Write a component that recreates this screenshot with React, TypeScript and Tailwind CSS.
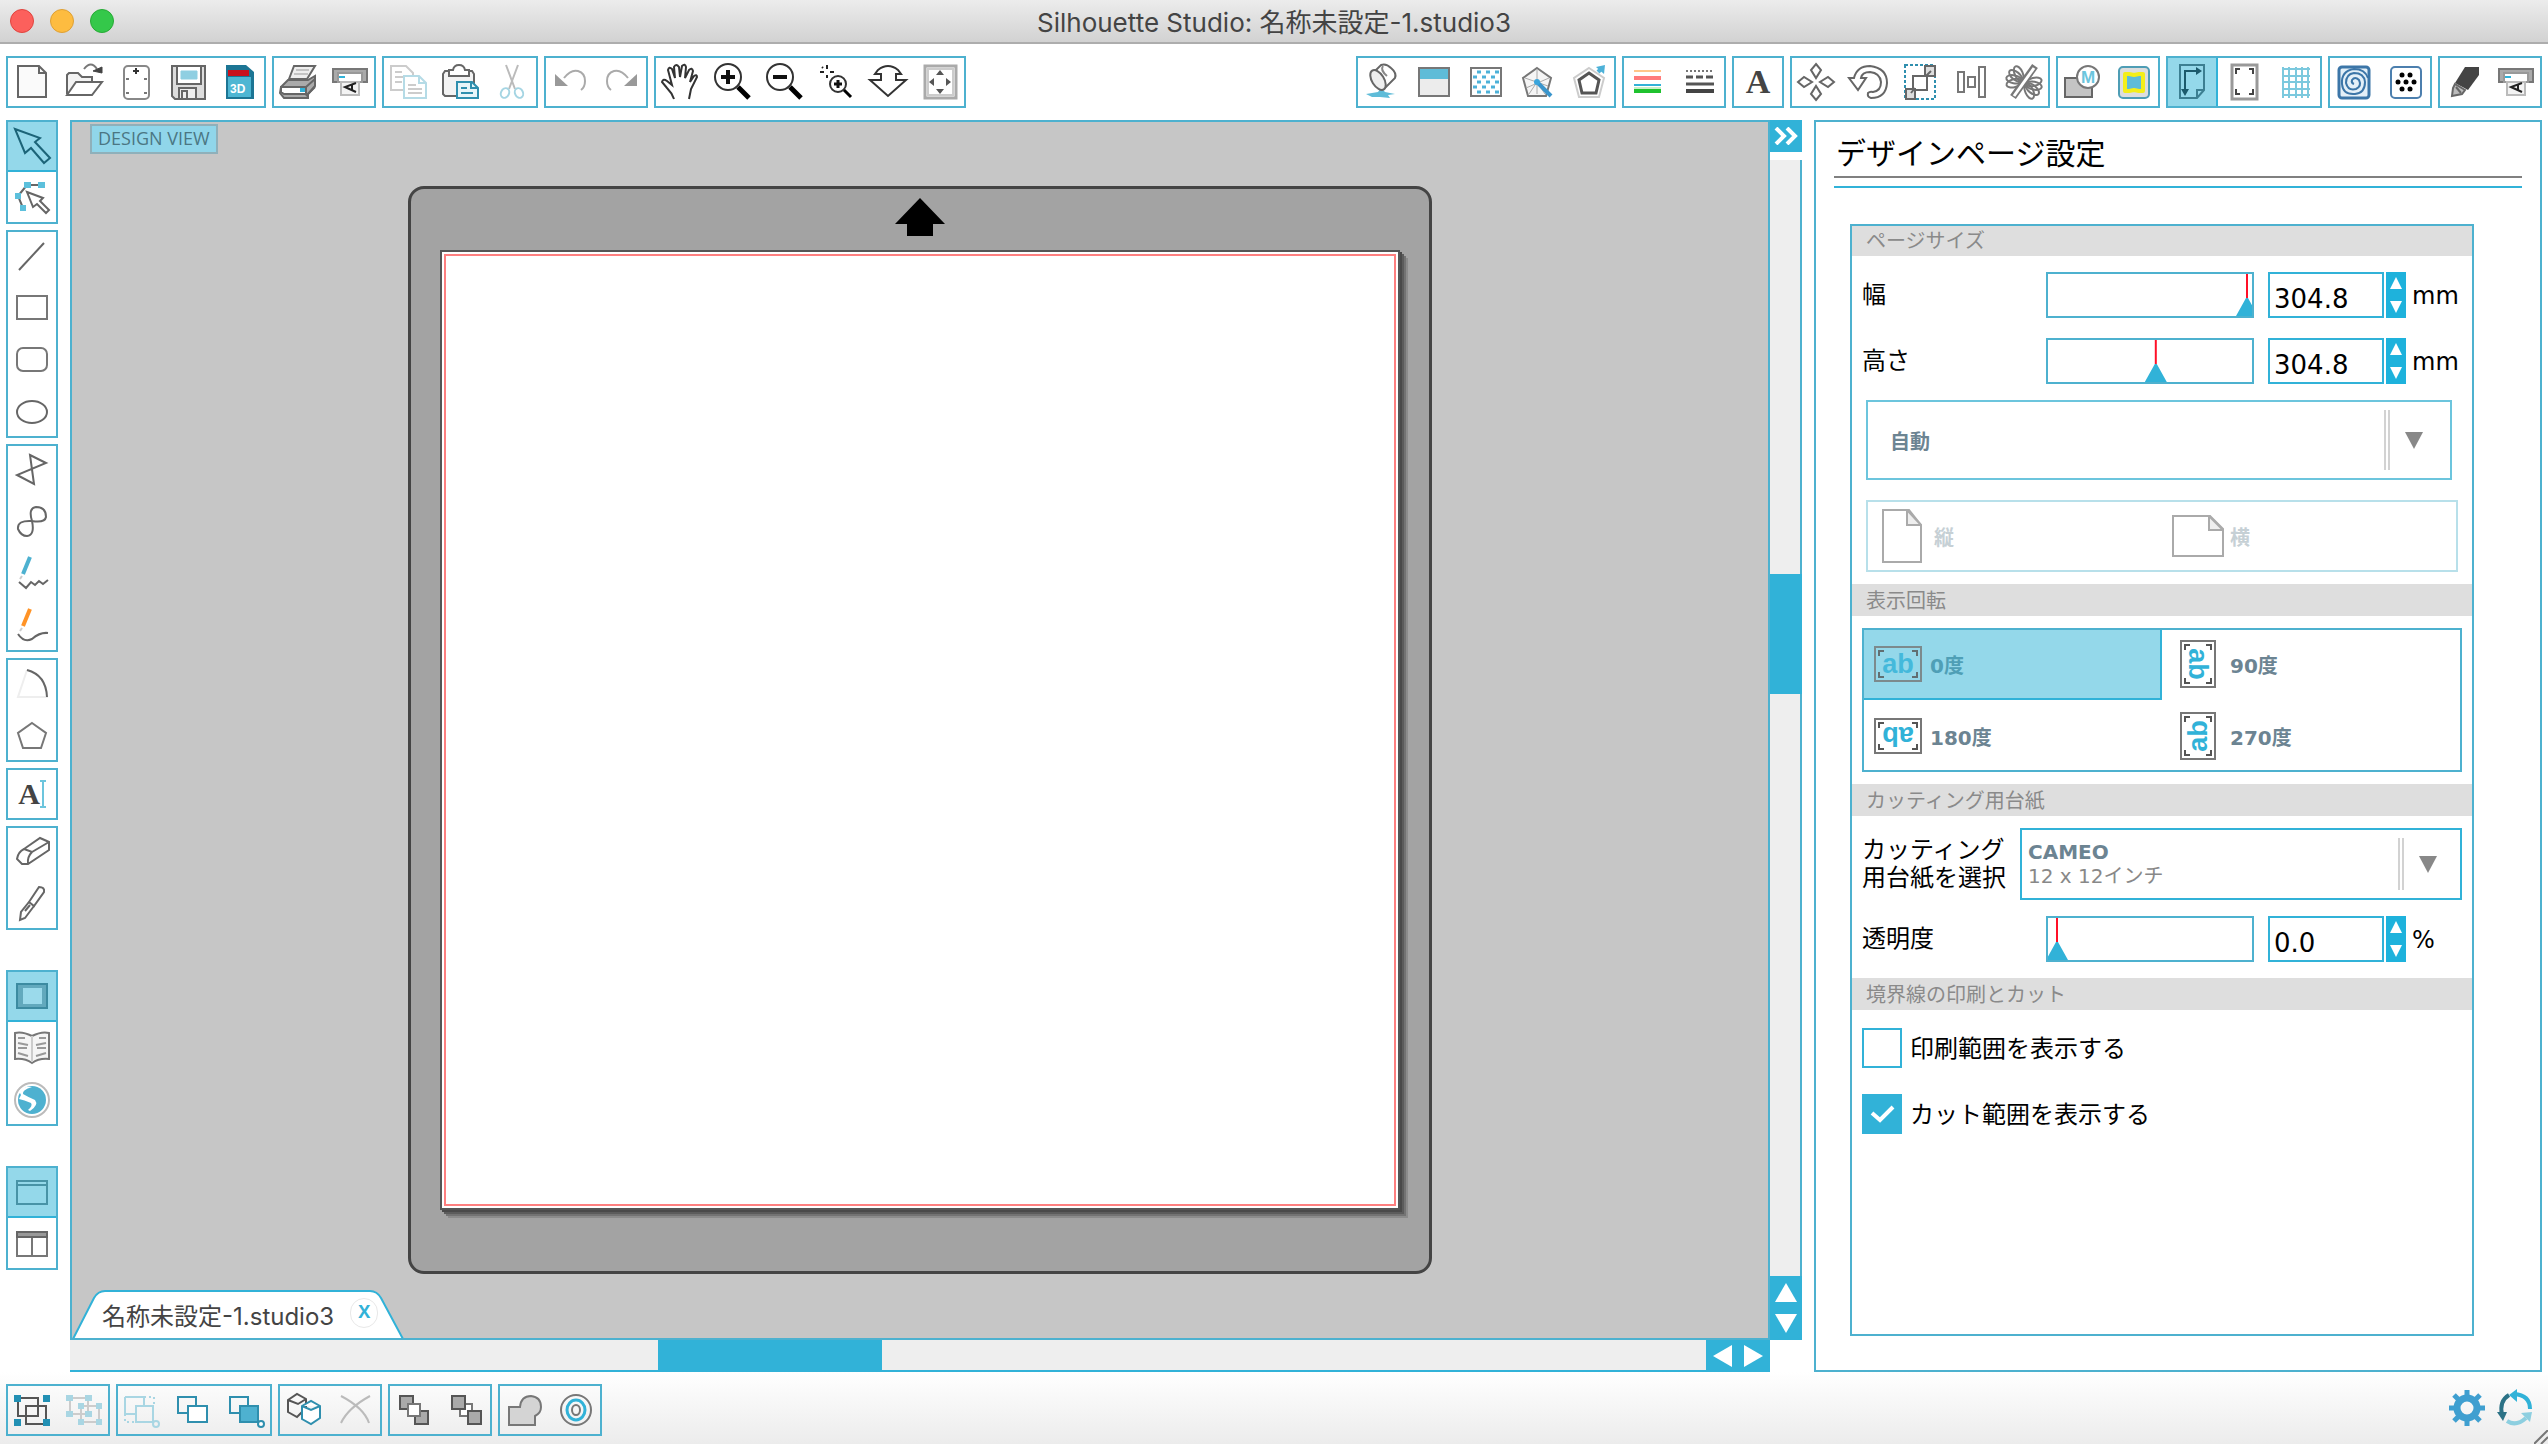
import { useState, type ReactNode } from "react";

const BLUE = "#31b2d8";
const TEAL = "#2f8fae";

const cutterIcon = (
  <>
    <path d="M9 13H43V26H38V17H14V26H9z" fill="#aaa" stroke="#777" />
    <path d="M14 17H38V26H14z" fill="#fff" stroke="#999" />
    <path d="M15 21h6" stroke={BLUE} />
    <path d="M17 26H35V39H17z" fill="#f3f3f3" stroke="#bbb" />
    <path d="M32 27L21 31L32 36M28 28v6" stroke="#222" strokeWidth="2" />
  </>
);

const sheetFold = (
  <>
    <path d="M12 10H33L40 17V41H12z" fill="#fafafa" />
    <path d="M33 10V17H40" />
  </>
);

const icons: Record<string, ReactNode> = {
  new: sheetFold,
  open: (
    <>
      <path d="M9 38V19L11 17H20L24 21H34V26" fill="#f3f3f3" />
      <path d="M9 39L18 26H44L34 39z" fill="#fff" />
      <path d="M26 13Q33 4 39 13" stroke="#777" />
      <path d="M35 15L44 11V17z" fill="#444" stroke="#444" strokeWidth="1" />
    </>
  ),
  mat: (
    <>
      <rect x="14" y="10" width="25" height="33" rx="4" stroke="#888" fill="#fff" />
      <path d="M26 12V18M23 15H29" stroke="#333" strokeWidth="2" />
      <path d="M16 23h3M34 23h3M16 37h3M34 37h3" stroke="#777" />
    </>
  ),
  save: (
    <>
      <path d="M10 10H43V43H13L10 40z" fill="#ddd" />
      <path d="M15 10H39V28H15z" fill="#fff" />
      <path d="M19 15H35V23H19z" fill="#8fcfe2" stroke="#8fcfe2" strokeWidth="1" />
      <path d="M17 42V32H34V42M20 42V35H25V42" fill="#eee" />
    </>
  ),
  sd: (
    <>
      <path d="M12 9H32L40 16V43H12z" fill="#1c7594" stroke="none" />
      <path d="M14 21H37V41H14z" fill="#4eb6d3" stroke="none" />
      <path d="M14 14H35V20H14z" fill="#c8101c" stroke="none" />
      <text x="16" y="37" fontSize="12" fontWeight="700" fill="#fff" stroke="none" fontFamily="Liberation Sans">3D</text>
    </>
  ),
  printer: (
    <>
      <path d="M17 23L22 10H43L35 23z" fill="#eee" />
      <path d="M24 14H37M22 18H36" stroke="#999" strokeWidth="1" />
      <path d="M9 31L16 24H36L43 20V30L36 38V42H12L8 37z" fill="#aaa" />
      <path d="M9 31H34V38H12L9 36z" fill="#fff" />
      <path d="M34 31L43 23M34 40L43 31" />
      <path d="M28 32h5v4h-5z" fill={BLUE} stroke="none" />
    </>
  ),
  cutter: cutterIcon,
  copy: (
    <>
      <path d="M9 10H24L31 17V34H9z" fill="#fff" stroke="#ccc" />
      <path d="M13 16H20M13 21H25M13 26H20" stroke="#ccc" />
      <path d="M22 20H37L44 27V42H22z" fill="#fff" stroke="#b5dbe6" />
      <path d="M37 20V27H44" stroke="#b5dbe6" />
      <path d="M26 29H34M26 33H40M26 37H40" stroke="#ccc" />
    </>
  ),
  paste: (
    <>
      <path d="M11 15H38L40 18V38L38 40H11L9 38V18z" fill="#f3f3f3" />
      <path d="M15 20V14H19Q20 9 25 9Q30 9 31 14H35V20z" fill="#fff" />
      <path d="M23 26H38L44 32V42H23z" fill="#e7f5f9" stroke={TEAL} />
      <path d="M37 26V32H44M27 32H33M27 37H39" stroke={TEAL} />
    </>
  ),
  cut: (
    <>
      <path d="M20 9L29 33M32 9L23 33" stroke="#bbb" />
      <ellipse cx="19" cy="37" rx="4" ry="5" stroke="#a5d5e3" transform="rotate(25 19 37)" />
      <ellipse cx="33" cy="37" rx="4" ry="5" stroke="#a5d5e3" transform="rotate(-25 33 37)" />
    </>
  ),
  undo: (
    <>
      <path d="M20 22Q27 13 34 15Q41 17 41 25Q41 31 37 34" stroke="#aaa" />
      <path d="M11 18V30H24z" fill="#999" stroke="none" />
    </>
  ),
  redo: (
    <>
      <path d="M32 22Q25 13 18 15Q11 17 11 25Q11 31 15 34" stroke="#aaa" />
      <path d="M41 18V30H28z" fill="#999" stroke="none" />
    </>
  ),
  hand: (
    <path
      d="M20 43Q18 37 13 32L8 26Q9 22 13 25L18 29L14 14Q15 10 18 13L21 22L20 11Q22 7 25 11L26 21L28 10Q31 7 32 11L31 22L35 14Q38 11 39 15L36 26L40 20Q43 18 43 21L37 33L35 43"
      stroke="#333"
    />
  ),
  zoomIn: (
    <>
      <circle cx="22" cy="21" r="13" stroke="#333" />
      <path d="M22 14V28M15 21H29" stroke="#111" strokeWidth="4" />
      <path d="M32 31L43 42" stroke="#000" strokeWidth="5" />
    </>
  ),
  zoomOut: (
    <>
      <circle cx="22" cy="21" r="13" stroke="#333" />
      <path d="M15 21H29" stroke="#111" strokeWidth="4" />
      <path d="M32 31L43 42" stroke="#000" strokeWidth="5" />
    </>
  ),
  zoomSelect: (
    <>
      <path d="M17 9V13M10 16H14M20 16H24M17 19V22M12 11L13 12" stroke="#222" strokeWidth="2" />
      <circle cx="28" cy="28" r="8" stroke="#333" />
      <path d="M28 24V32M24 28H32" stroke="#111" strokeWidth="3" />
      <path d="M34 34L41 41" stroke="#000" strokeWidth="3" />
    </>
  ),
  zoomDrag: (
    <path d="M8 24L26 40L44 24H34V18H39L36 14Q31 10 26 10Q21 10 16 14L13 18H19V24z" stroke="#333" fill="#fff" />
  ),
  fit: (
    <>
      <rect x="11" y="10" width="31" height="32" stroke="#aaa" strokeWidth="3" />
      <rect x="14" y="13" width="25" height="26" stroke="#ccc" strokeWidth="2" />
      <path d="M26 14L30 19H22zM26 38L22 33H30zM15 26L20 22V30zM37 26L32 30V22z" fill="#555" stroke="none" />
    </>
  ),
  fill: (
    <>
      <path d="M10 38L22 36L25 32L29 36L39 38L32 39L34 42L24 41L16 41z" fill="#5fbcd8" stroke="none" />
      <path d="M18 16L25 9Q30 7 35 12Q41 17 39 22L28 33z" fill="#fff" />
      <path d="M27 10Q24 14 31 20" stroke="#888" />
      <ellipse cx="22" cy="24" rx="6" ry="11" fill="#eee" transform="rotate(-32 22 24)" />
    </>
  ),
  gradient: (
    <>
      <path d="M11 12H41V23H11z" fill="#5fbcd8" stroke="none" />
      <path d="M11 23H41V40H11z" fill="#ececec" stroke="none" />
      <path d="M11 12H41V40H11z" stroke="#777" />
    </>
  ),
  pattern: (
    <>
      <path d="M11 12H41V40H11z" stroke="#777" fill="#fff" />
      <path
        d="M17 16h4m5 0h4m5 0h4M13 21h4m5 0h4m5 0h4M17 26h4m5 0h4m5 0h4M13 31h4m5 0h4m5 0h4M17 36h4m5 0h4m5 0h4"
        stroke="#4db1d8"
        strokeWidth="3"
      />
    </>
  ),
  effects: (
    <>
      <path d="M25 12L39 22L34 40H16L11 22z" stroke="#777" fill="#f5f5f5" />
      <path d="M25 14V38M13 22L36 30M37 22L14 32M17 38L25 26L33 38" stroke="#aaa" strokeWidth="1" />
      <path d="M26 27L39 40" stroke="#3a95cc" strokeWidth="4" />
      <circle cx="25" cy="26" r="3" fill="#3aa5dc" stroke="none" />
    </>
  ),
  shadow: (
    <>
      <path d="M25 12L40 22L35 41H15L10 22z" stroke="#ccc" />
      <path d="M25 17L35 24L32 37H18L15 24z" stroke="#555" strokeWidth="3" />
      <path d="M34 16L38 12" stroke="#4db1d8" strokeWidth="4" />
      <path d="M32 11L41 9L40 18z" fill="#4db1d8" stroke="none" />
    </>
  ),
  lineColor: (
    <>
      <path d="M12 15H39" stroke="#ffc68a" />
      <path d="M12 22H39" stroke="#ff7b7b" strokeWidth="4" />
      <path d="M12 29H39" stroke={BLUE} />
      <path d="M12 32H39" stroke="#c9f0c9" />
      <path d="M12 35H39" stroke="#1fc22f" strokeWidth="4" />
    </>
  ),
  lineStyle: (
    <>
      <path d="M12 15H40" stroke="#777" strokeDasharray="2 2" />
      <path d="M12 21H40" stroke="#555" strokeWidth="3" strokeDasharray="7 3" />
      <path d="M12 28H40" stroke="#555" strokeWidth="3" />
      <path d="M12 35H40" stroke="#444" strokeWidth="4" />
    </>
  ),
  text: (
    <text x="26" y="37" fontSize="34" fontWeight="700" textAnchor="middle" fill="#444" stroke="none" fontFamily="Liberation Serif">A</text>
  ),
  move: (
    <path d="M26 8L31 14L26 22L21 14zM26 44L31 38L26 30L21 38zM8 26L14 21L22 26L14 31zM44 26L38 21L30 26L38 31z" stroke="#666" />
  ),
  rotate: (
    <path
      d="M7 22H12Q15 10 28 10Q45 12 45 27Q44 42 29 42Q25 41 26 37Q28 35 31 36Q39 35 39 26Q38 17 28 16Q20 16 19 22H24L16 34z"
      stroke="#666"
      fill="#fff"
    />
  ),
  scale: (
    <>
      <rect x="11" y="9" width="30" height="34" stroke={TEAL} strokeDasharray="3 2" />
      <path d="M19 20H33V34H19z" fill="#fff" stroke="#666" />
      <path d="M31 10H41V20H31zM12 33H21V43H12z" fill="#ddd" stroke="#666" />
      <path d="M17 37L21 32M32 20L37 15" stroke="#666" />
    </>
  ),
  align: (
    <>
      <rect x="12" y="16" width="6" height="20" stroke="#777" />
      <rect x="22" y="21" width="7" height="10" stroke="#777" />
      <rect x="33" y="11" width="6" height="30" stroke="#777" />
    </>
  ),
  replicate: (
    <g stroke="#777">
      {[165, 192, 219, 246].map((angle) => (
        <ellipse key={angle} cx="32" cy="25" rx="8" ry="4" transform={`rotate(${angle} 24 25)`} />
      ))}
      {[-15, 12, 39, 66].map((angle) => (
        <ellipse key={angle} cx="36" cy="28" rx="8" ry="4" transform={`rotate(${angle} 28 28)`} />
      ))}
      <path d="M15 41L37 10" strokeWidth="7" />
      <path d="M16 40L36 12" stroke="#fff" strokeWidth="3" />
    </g>
  ),
  modify: (
    <>
      <path d="M9 22H36V41H9z" fill="#c4c4c4" />
      <circle cx="32" cy="21" r="11" fill="#fff" stroke="#777" />
      <text x="32" y="27" fontSize="17" fontWeight="700" textAnchor="middle" fill="#6cc5dd" stroke="none" fontFamily="Liberation Sans">M</text>
    </>
  ),
  trace: (
    <>
      <rect x="11" y="11" width="30" height="31" rx="4" fill="#ddd" stroke="#4e9db5" />
      <path d="M17 18H21L26 19L31 18H35V35H31L26 34L21 35H17z" fill="#5fbcd8" stroke="#f4ee18" strokeWidth="4" strokeLinejoin="round" />
    </>
  ),
  page: (
    <>
      <path d="M14 9H38V34L31 42H14z" stroke="#3c7f92" />
      <path d="M31 42V34H38" stroke="#3c7f92" />
      <path d="M19 37V15H34" stroke="#1c5a6c" />
      <path d="M30 11L36 15L30 19zM15 33H23L19 40z" fill="#1c5a6c" stroke="none" />
    </>
  ),
  regMarks: (
    <>
      <rect x="14" y="9" width="25" height="34" stroke="#999" strokeWidth="3" fill="#fff" />
      <path d="M18 18V13H22M31 13H35V18M18 33V38H22M35 33V38H31" stroke="#444" />
    </>
  ),
  grid: (
    <path d="M13 11V42M19 11V42M26 11V42M32 11V42M38 11V42M12 13H40M12 20H40M12 26H40M12 33H40M12 39H40" stroke="#7cc9de" />
  ),
  sketch: (
    <>
      <rect x="11" y="11" width="30" height="31" rx="3" fill="#e4f0f8" stroke="#3c76a8" strokeWidth="3" />
      <path
        d="M26 28Q23 27 24 24Q27 20 31 24Q34 30 28 33Q20 35 18 27Q18 18 26 17Q36 17 37 26Q37 37 27 38Q15 39 14 28Q13 15 26 13Q37 13 40 22"
        stroke="#3c76a8"
      />
    </>
  ),
  rhinestone: (
    <>
      <rect x="11" y="11" width="30" height="31" rx="4" fill="#fff" stroke="#4c7fae" />
      <g fill="#000" stroke="none">
        <circle cx="22" cy="19" r="2.500" />
        <circle cx="30" cy="19" r="2.500" />
        <circle cx="18" cy="26" r="2.500" />
        <circle cx="26" cy="26" r="2.500" />
        <circle cx="34" cy="26" r="2.500" />
        <circle cx="22" cy="33" r="2.500" />
        <circle cx="30" cy="33" r="2.500" />
      </g>
    </>
  ),
  blade: (
    <>
      <path d="M27 11H41V19L30 34L17 27z" fill="#444" stroke="none" />
      <path d="M17 28L27 34L24 38L14 40L15 32z" fill="#bbb" />
      <path d="M18 31L23 37" />
    </>
  ),
  select: <path d="M9 9L34 18L29 22L44 38L38 43L25 28L19 33z" stroke="#1c6478" />,
  editPoints: (
    <>
      <path d="M21 13H36M21 13L12 24L17 36" />
      <path d="M21 20L37 26L34 29L43 38L40 41L31 32L27 35z" fill="#fff" />
      <path d="M18 10h7v6h-7zM32 10h7v6h-7zM9 21h6v6h-6zM14 33h6v6h-6z" fill="#5cc0dc" stroke="none" />
    </>
  ),
  line: <path d="M13 40L38 13" />,
  rect: <rect x="11" y="14" width="30" height="23" stroke="#777" />,
  roundRect: <rect x="11" y="14" width="30" height="23" rx="6" stroke="#777" />,
  ellipse: <ellipse cx="26" cy="26" rx="15" ry="11" stroke="#666" />,
  polygon: <path d="M24 11L40 19L11 31L28 40z" stroke="#666" />,
  curve: <path d="M26 25Q22 12 30 11Q40 11 40 21Q39 27 26 25Q11 24 12 33Q15 40 21 40Q29 39 26 25z" stroke="#666" />,
  freehand: (
    <>
      <path d="M24 9L17 26" stroke="#4db1d0" strokeWidth="4" />
      <path d="M13 34L20 40L25 34L29 37L33 33L37 36L42 32" />
      <path d="M16 28L14 31" stroke="#ccc" />
    </>
  ),
  smooth: (
    <>
      <path d="M24 9L17 26" stroke="#ff9326" strokeWidth="4" />
      <path d="M12 34Q18 43 26 39Q34 32 42 33" />
      <path d="M16 28L14 31" stroke="#ccc" />
    </>
  ),
  arc: (
    <>
      <path d="M21 12L12 39H42" stroke="#eee" />
      <path d="M21 12Q40 17 41 39" />
    </>
  ),
  pentagon: <path d="M26 13L40 23L35 38H17L12 23z" stroke="#777" />,
  textTool: (
    <>
      <text x="23" y="36" fontSize="30" fontWeight="700" textAnchor="middle" fill="#444" stroke="none" fontFamily="Liberation Serif">A</text>
      <path d="M37 13V39M34 13H40M34 39H40" stroke="#6cc5dd" />
    </>
  ),
  eraser: (
    <path d="M11 33Q12 26 18 23L34 12L43 16V24L22 38H16zM18 23L26 26L43 16M26 26Q21 31 22 38" stroke="#666" />
  ),
  knife: (
    <>
      <path d="M23 24L33 9Q39 9 38 14L28 28z" />
      <path d="M23 24L15 34L14 42L19 40L28 28M19 33L24 27" />
    </>
  ),
  matView: (
    <>
      <rect x="11" y="14" width="30" height="24" fill="#62a9bd" stroke="#3c8ba1" />
      <path d="M17 18H36V34H17z" fill="#9bdaeb" stroke="none" />
    </>
  ),
  library: (
    <>
      <path d="M26 14Q16 9 9 11V37Q19 36 26 41Q33 36 43 37V11Q36 9 26 14z" fill="#f5f5f5" stroke="#777" />
      <path d="M26 14V40" stroke="#ccc" />
      <path d="M12 16H19M12 21L22 23M12 26H21M12 31L22 34M40 16H33M40 21L30 23M40 26H31M40 31L30 34" stroke="#999" />
    </>
  ),
  store: (
    <>
      <circle cx="26" cy="26" r="17" fill="#fff" stroke="#bbb" />
      <circle cx="26" cy="26" r="14" fill="#4eb1d0" stroke="none" />
      <path d="M13 17Q18 12 26 13Q16 16 17 20Q22 23 29 26Q33 31 24 37L22 36Q27 32 25 29Q18 26 13 25L15 21z" fill="#fff" stroke="none" />
    </>
  ),
  window: <path d="M11 15H41V38H11zM11 19H41" stroke="#4893a7" />,
  split: (
    <>
      <path d="M11 14H41V38H11zM26 19V38" stroke="#777" />
      <path d="M11 14H41V19H11z" fill="#999" stroke="#666" />
    </>
  ),
  group: (
    <>
      <path d="M12 14H32V32H12zM20 22H40V40H20z" stroke="#555" />
      <path d="M8 11h7v7h-7zM37 11h7v7h-7zM8 35h7v7h-7zM37 35h7v7h-7z" fill="#2290b4" stroke="none" />
    </>
  ),
  ungroup: (
    <>
      <path d="M12 14H30V30H12zM23 22H41V38H23z" stroke="#ccc" />
      <path d="M8 11h7v6h-7zM27 11h7v6h-7zM8 27h7v6h-7zM27 27h7v6h-7zM20 19h6v6h-6zM38 19h6v6h-6zM20 35h6v6h-6zM38 35h6v6h-6z" fill="#a9d6e3" stroke="none" />
    </>
  ),
  selectAll: (
    <>
      <path d="M9 13H28V22M9 13V30H19" stroke="#a9d6e3" />
      <path d="M20 22H37V38H20z" stroke="#a9d6e3" />
      <path d="M28 13H38V22M9 30V38H20" stroke="#a9d6e3" strokeDasharray="2 3" />
      <circle cx="40" cy="40" r="3" stroke="#a9d6e3" />
    </>
  ),
  duplicate: (
    <>
      <path d="M10 13H28V29H10z" stroke={TEAL} />
      <path d="M20 22H39V38H20z" fill="#fff" stroke={TEAL} />
    </>
  ),
  duplicateFill: (
    <>
      <path d="M10 13H28V29H10z" stroke={TEAL} />
      <path d="M20 22H38V38H20z" fill="#4eb1d0" stroke={TEAL} />
      <circle cx="41" cy="40" r="3" fill="#fff" stroke={TEAL} />
    </>
  ),
  cubes: (
    <>
      <path d="M10 16L19 10L28 15V24L19 33L10 28zM10 16L20 20L28 15" stroke="#555" />
      <path d="M24 22L33 17L42 22V34L33 40L24 35zM24 22L33 26L42 22" fill="#fff" stroke={TEAL} />
    </>
  ),
  cross: <path d="M11 12Q34 24 39 39M40 12Q18 24 11 39" stroke="#bbb" />,
  front: (
    <>
      <path d="M12 12H25V25H12zM27 27H40V40H27z" fill="#aaa" stroke="#555" />
      <path d="M20 20H32V32H20z" fill="#fff" stroke="#777" />
    </>
  ),
  back: (
    <>
      <path d="M20 20H32V32H20z" fill="#fff" stroke="#777" />
      <path d="M12 12H25V25H12zM28 27H41V40H28z" fill="#aaa" stroke="#555" />
    </>
  ),
  weld: <path d="M11 23H22Q23 12 33 12Q43 13 43 23Q43 29 37 32V41H11z" fill="#d4d4d4" stroke="#777" />,
  offset: (
    <>
      <circle cx="26" cy="26" r="15" stroke="#777" />
      <ellipse cx="26" cy="26" rx="9" ry="10" stroke={BLUE} strokeWidth="3" />
      <ellipse cx="26" cy="26" rx="4" ry="5" stroke="#777" />
    </>
  ),
};

function Icon({ name }: { name: string }) {
  return (
    <svg viewBox="0 0 52 52" className="size-[52px] shrink-0" fill="none" stroke="#666" strokeWidth="2" aria-hidden="true">
      {icons[name]}
    </svg>
  );
}

function ToolGroup({ items, active, vertical }: { items: string[]; active?: string; vertical?: boolean }) {
  return (
    <div className={`flex shrink-0 outline-2 -outline-offset-2 outline-[#4db1cf] ${vertical ? "flex-col" : ""}`}>
      {items.map((name) => (
        <button
          key={name}
          type="button"
          aria-label={name}
          aria-pressed={name === active}
          className={`size-[52px] ${name === active ? (vertical ? "border-b-2 border-[#31b2d8] bg-[#94d8ea]" : "border-r-2 border-[#31b2d8] bg-[#94d8ea]") : ""}`}
        >
          <Icon name={name} />
        </button>
      ))}
    </div>
  );
}

function Section({ title }: { title: string }) {
  return (
    <h3 className="flex h-8 items-center bg-[#dedede] px-[14px] pt-0.5 text-[20px] leading-none text-[#8a8a8a]">{title}</h3>
  );
}

function Spinner() {
  return (
    <div className="ml-0.5 flex h-[46px] w-5 flex-col justify-center gap-1 bg-[#1eb2dc]">
      <button type="button" aria-label="increase" className="flex h-5 items-center justify-center">
        <svg viewBox="0 0 12 12" className="size-3" aria-hidden="true"><path d="M6 0L12 12H0z" fill="#fff" /></svg>
      </button>
      <button type="button" aria-label="decrease" className="flex h-5 items-center justify-center">
        <svg viewBox="0 0 12 12" className="size-3" aria-hidden="true"><path d="M0 0H12L6 12z" fill="#fff" /></svg>
      </button>
    </div>
  );
}

function SliderRow({ label, value, unit, position }: { label: string; value: string; unit: string; position: number }) {
  const [text, setText] = useState(value);
  return (
    <div className="flex h-[46px] items-center pl-2.5 text-[24px] leading-7 text-black">
      <label htmlFor={`field-${label}`} className="w-[184px] shrink-0">{label}</label>
      <div className="h-[46px] w-[208px] shrink-0 overflow-hidden border-2 border-[#4db1cf] bg-white">
        <input
          type="range"
          aria-label={label}
          defaultValue={position}
          className="-ml-0.5 block h-full w-[calc(100%+8px)] appearance-none bg-transparent [&::-webkit-slider-thumb]:h-[42px] [&::-webkit-slider-thumb]:w-[22px] [&::-webkit-slider-thumb]:appearance-none [&::-webkit-slider-thumb]:bg-[linear-gradient(#ff1028_24px,#31b2d8_24px)] [&::-webkit-slider-thumb]:[clip-path:polygon(10px_0,12px_0,12px_24px,22px_42px,0_42px,10px_24px)]"
        />
      </div>
      <input
        id={`field-${label}`}
        type="text"
        value={text}
        onChange={(e) => setText(e.target.value)}
        className="ml-[14px] h-[46px] w-[116px] shrink-0 border-2 border-[#31b2d8] bg-white pt-2 pl-1 text-[26px] outline-none"
      />
      <Spinner />
      <span className="ml-1.5 pt-0.5">{unit}</span>
    </div>
  );
}

function DropArrow({ className }: { className: string }) {
  return (
    <span className={`pointer-events-none col-start-1 row-start-1 flex h-full items-center gap-[15px] justify-self-end py-2 ${className}`}>
      <span className="h-full w-1.5 border-x-2 border-[#d2d2d2]" />
      <svg viewBox="0 0 18 17" className="h-[17px] w-[18px]" aria-hidden="true"><path d="M0 0H18L9 17z" fill="#888" /></svg>
    </span>
  );
}

function RotationIcon({ degrees }: { degrees: number }) {
  const upright = degrees % 180 === 0;
  const w = upright ? 48 : 36;
  const h = upright ? 36 : 48;
  return (
    <svg viewBox={`0 0 ${w} ${h}`} width={w} height={h} fill="none" aria-hidden="true">
      <rect x="1" y="1" width={w - 2} height={h - 2} stroke="#777" strokeWidth="2" />
      <path
        d={`M5 10V5H10M${w - 10} 5H${w - 5}V10M5 ${h - 10}V${h - 5}H10M${w - 10} ${h - 5}H${w - 5}V${h - 10}`}
        stroke="#555"
        strokeWidth="2"
      />
      <text
        x={w / 2}
        y={h / 2 + 9}
        textAnchor="middle"
        fontSize="27"
        fontFamily="Liberation Sans"
        fill={BLUE}
        transform={`rotate(${degrees} ${w / 2} ${h / 2})`}
      >
        ab
      </text>
    </svg>
  );
}

function RotationOption({ degrees, checked, onSelect }: { degrees: number; checked: boolean; onSelect: () => void }) {
  return (
    <label
      className={`flex h-[72px] items-center gap-2 text-[20px] font-bold ${checked ? "bg-[#94d8ea] text-[#4f9fb6] outline-2 -outline-offset-2 outline-[#31b2d8]" : "text-[#6c8492]"}`}
    >
      <input type="radio" name="rotation" checked={checked} onChange={onSelect} className="sr-only" />
      <span className={`ml-3 flex w-12 justify-center ${checked ? "opacity-80" : ""}`}>
        <RotationIcon degrees={degrees} />
      </span>
      <span className="pt-1">{degrees}度</span>
    </label>
  );
}

function CheckRow({ label, initial }: { label: string; initial: boolean }) {
  return (
    <label className="flex h-10 items-center pl-2.5 text-[24px] leading-7 text-black">
      <span className="mr-2 grid size-10">
        <input
          type="checkbox"
          defaultChecked={initial}
          className="col-start-1 row-start-1 size-10 appearance-none border-2 border-[#31b2d8] bg-white checked:bg-[#31b2d8]"
        />
        <svg viewBox="0 0 40 40" className="pointer-events-none col-start-1 row-start-1 size-10" aria-hidden="true">
          <path d="M10 19L18 26L31 13" fill="none" stroke="#fff" strokeWidth="4" />
        </svg>
      </span>
      <span className="pt-0.5">{label}</span>
    </label>
  );
}

function Panel() {
  const [rotation, setRotation] = useState(0);
  return (
    <aside className="flex w-[728px] shrink-0 flex-col border-2 border-[#4db1cf] bg-white pt-3">
      <h2 className="mx-[18px] border-b-2 border-[#808080] pb-0.5 pl-0.5 text-[30px] leading-10 text-black">デザインページ設定</h2>
      <div className="mx-[18px] mt-2 h-0.5 bg-[#31b2d8]" />
      <div className="mt-9 mr-[66px] mb-[34px] ml-[34px] flex grow flex-col border-x-2 border-b-2 border-[#4db1cf]">
        <h3 className="flex h-8 items-center border-t-2 border-[#4db1cf] bg-[#dedede] px-[14px] text-[20px] leading-none text-[#8a8a8a]">ページサイズ</h3>
        <div className="mt-4 flex flex-col gap-5">
          <SliderRow label="幅" value="304.8" unit="mm" position={100} />
          <SliderRow label="高さ" value="304.8" unit="mm" position={52} />
        </div>
        <div className="mt-4 mr-5 ml-[14px] grid h-20 items-center border-2 border-[#6cc5dd]">
          <select aria-label="ページサイズ" className="col-start-1 row-start-1 h-full w-full appearance-none bg-transparent pt-1 pl-[22px] text-[20px] font-bold text-[#6c8492]">
            <option>自動</option>
          </select>
          <DropArrow className="mr-[27px]" />
        </div>
        <fieldset disabled className="mx-[14px] mt-5 grid h-[72px] grid-cols-2 border-2 border-[#b8e0ea] text-[20px] font-bold text-[#c6d0d5]">
          <label className="flex h-[68px] items-center">
            <input type="radio" name="orientation" className="sr-only" />
            <svg viewBox="0 0 40 54" className="mr-3 ml-[14px] h-[54px] w-10" fill="#fff" stroke="#aaa" strokeWidth="2" aria-hidden="true">
              <path d="M1 1H27L39 16V53H1z" />
              <path d="M25 1V16H39z" fill="#eee" />
            </svg>
            <span className="pt-1">縦</span>
          </label>
          <label className="flex h-[68px] items-center">
            <input type="radio" name="orientation" className="sr-only" />
            <svg viewBox="0 0 52 42" className="mr-1.5 ml-2.5 h-[42px] w-[52px]" fill="#fff" stroke="#aaa" strokeWidth="2" aria-hidden="true">
              <path d="M1 1H38L51 14V41H1z" />
              <path d="M37 1V15H51z" fill="#eee" />
            </svg>
            <span className="pt-1">横</span>
          </label>
        </fieldset>
        <div className="mt-3"><Section title="表示回転" /></div>
        <fieldset className="mx-2.5 mt-3 grid grid-cols-2 outline-2 -outline-offset-2 outline-[#4db1cf]">
          {[0, 90, 180, 270].map((d) => (
            <RotationOption key={d} degrees={d} checked={rotation === d} onSelect={() => setRotation(d)} />
          ))}
        </fieldset>
        <div className="mt-3"><Section title="カッティング用台紙" /></div>
        <div className="mx-2.5 mt-3 flex h-[72px] items-center">
          <label htmlFor="mat" className="w-[158px] shrink-0 text-[24px] leading-7 text-black">
            カッティング
            <br />
            用台紙を選択
          </label>
          <div className="grid h-[72px] grow items-center border-2 border-[#31b2d8] text-[20px]">
            <select id="mat" className="col-start-1 row-start-1 h-full w-full appearance-none bg-transparent pb-6 pl-1.5 font-bold text-[#6c8492]">
              <option>CAMEO</option>
            </select>
            <span className="pointer-events-none col-start-1 row-start-1 pt-6 pl-1.5 leading-6 text-[#888]">12 x 12インチ</span>
            <DropArrow className="mr-[23px]" />
          </div>
        </div>
        <div className="mt-4"><SliderRow label="透明度" value="0.0" unit="%" position={0} /></div>
        <div className="mt-4"><Section title="境界線の印刷とカット" /></div>
        <div className="mt-[18px] flex flex-col gap-[26px]">
          <CheckRow label="印刷範囲を表示する" initial={false} />
          <CheckRow label="カット範囲を表示する" initial />
        </div>
      </div>
    </aside>
  );
}

function ScrollArrow({ label, points }: { label: string; points: string }) {
  return (
    <button type="button" aria-label={label} className="flex size-8 items-center justify-center bg-[#31b2d8]">
      <svg viewBox="0 0 24 24" className="size-6" aria-hidden="true"><polygon points={points} fill="#fff" /></svg>
    </button>
  );
}

function Workspace() {
  return (
    <div className="flex min-w-0 grow">
      <div className="flex min-w-0 grow flex-col">
        <main className="flex grow flex-col border-2 border-[#4db1cf] bg-[#c6c6c6]">
          <div className="mt-0.5 ml-[18px] self-start border-2 border-[#8fb0ba] bg-[#90d6ea] px-1.5 pb-0.5 font-['Open_Sans'] text-[18px] leading-6 text-[#4b7683]">
            DESIGN VIEW
          </div>
          <div className="mx-auto mt-8 flex flex-col items-center rounded-[16px] border-[3px] border-[#444] bg-[#a3a3a3] px-[29px] pb-[61px]">
            <svg viewBox="0 0 50 38" className="mt-[9px] h-[38px] w-[50px]" aria-hidden="true">
              <path d="M25 0L50 26H38V38H12V26H0z" fill="#000" />
            </svg>
            <div className="mt-[14px] size-[960px] border-2 border-[#555] bg-white p-0.5 shadow-[2px_2px_0_#4a4a4a,4px_4px_0_#5c5c5c,6px_6px_0_#737373,8px_8px_0_#8c8c8c]">
              <div className="h-full w-full border-2 border-[#ff8080]" />
            </div>
          </div>
          <div className="relative mt-auto flex h-12 w-[332px] items-center pl-[30px]">
            <svg viewBox="0 0 332 48" className="absolute inset-0 h-full w-full" aria-hidden="true">
              <path d="M1 49L22 8Q26 1 33 1H298Q305 1 309 8L331 49" fill="#fff" stroke={BLUE} strokeWidth="2" />
            </svg>
            <span className="relative pt-1.5 font-[Inter,'Noto_Sans_CJK_JP',sans-serif] text-[24px] leading-8 text-[#444]">名称未設定-1.studio3</span>
            <button type="button" aria-label="close tab" className="relative mt-2 ml-4 flex h-[30px] w-7 justify-center self-start rounded-full border border-[#e8e8e8] font-['Open_Sans'] text-[18px] leading-6 font-bold text-[#31b2d8]">
              X
            </button>
          </div>
        </main>
        <div className="flex h-8 border-b-2 border-[#31b2d8] bg-[#eee]">
          <div className="ml-[588px] h-8 w-56 bg-[#31b2d8]" />
          <div className="ml-auto flex">
            <ScrollArrow label="scroll left" points="3,12 22,1 22,23" />
            <ScrollArrow label="scroll right" points="21,12 2,1 2,23" />
          </div>
        </div>
      </div>
      <div className="flex w-8 flex-col pb-8">
        <button type="button" aria-label="collapse panel" className="mb-2 flex h-8 items-center justify-center bg-[#31b2d8]">
          <svg viewBox="0 0 24 18" className="h-[18px] w-6" fill="none" stroke="#fff" strokeWidth="4" aria-hidden="true">
            <path d="M2 1L10 9L2 17M13 1L21 9L13 17" />
          </svg>
        </button>
        <div className="grow border-r-2 border-[#4db1cf] bg-[#eee]">
          <div className="mt-[414px] h-[120px] w-8 bg-[#31b2d8]" />
        </div>
        <ScrollArrow label="scroll up" points="12,3 23,22 1,22" />
        <ScrollArrow label="scroll down" points="12,21 1,2 23,2" />
      </div>
    </div>
  );
}

export default function App() {
  return (
    <div className="flex min-h-screen flex-col bg-white font-['DejaVu_Sans','Noto_Sans_CJK_JP',sans-serif]">
      <header className="grid h-11 grid-cols-[1fr_auto_1fr] items-center border-b-2 border-[#adadad] bg-linear-to-b from-[#ececec] to-[#d2d2d2] px-2.5">
        <div className="flex gap-4">
          <button type="button" aria-label="close" className="size-6 rounded-full border border-[#e0443e] bg-[#fc605c]" />
          <button type="button" aria-label="minimize" className="size-6 rounded-full border border-[#dea034] bg-[#fdbc40]" />
          <button type="button" aria-label="zoom" className="size-6 rounded-full border border-[#27aa35] bg-[#34c84a]" />
        </div>
        <h1 className="pt-1 font-[Inter,'Noto_Sans_CJK_JP',sans-serif] text-[26px] leading-9 text-[#444]">Silhouette Studio: 名称未設定-1.studio3</h1>
      </header>

      <nav className="flex gap-1.5 px-1.5 py-3">
        <ToolGroup items={["new", "open", "mat", "save", "sd"]} />
        <ToolGroup items={["printer", "cutter"]} />
        <ToolGroup items={["copy", "paste", "cut"]} />
        <ToolGroup items={["undo", "redo"]} />
        <ToolGroup items={["hand", "zoomIn", "zoomOut", "zoomSelect", "zoomDrag", "fit"]} />
        <div className="grow" />
        <ToolGroup items={["fill", "gradient", "pattern", "effects", "shadow"]} />
        <ToolGroup items={["lineColor", "lineStyle"]} />
        <ToolGroup items={["text"]} />
        <ToolGroup items={["move", "rotate", "scale", "align", "replicate"]} />
        <ToolGroup items={["modify", "trace"]} />
        <ToolGroup items={["page", "regMarks", "grid"]} active="page" />
        <ToolGroup items={["sketch", "rhinestone"]} />
        <ToolGroup items={["blade", "cutter"]} />
      </nav>

      <div className="flex grow gap-3 px-1.5">
        <nav className="flex flex-col gap-1.5">
          <ToolGroup vertical items={["select", "editPoints"]} active="select" />
          <ToolGroup vertical items={["line", "rect", "roundRect", "ellipse"]} />
          <ToolGroup vertical items={["polygon", "curve", "freehand", "smooth"]} />
          <ToolGroup vertical items={["arc", "pentagon"]} />
          <ToolGroup vertical items={["textTool"]} />
          <ToolGroup vertical items={["eraser", "knife"]} />
          <div className="mt-[34px]"><ToolGroup vertical items={["matView", "library", "store"]} active="matView" /></div>
          <div className="mt-[34px]"><ToolGroup vertical items={["window", "split"]} active="window" /></div>
        </nav>
        <Workspace />
        <Panel />
      </div>

      <footer className="flex items-center bg-linear-to-b from-white to-[#ececec] pt-3 pb-2 pl-1.5">
        <div className="flex gap-1.5">
          <ToolGroup items={["group", "ungroup"]} />
          <ToolGroup items={["selectAll", "duplicate", "duplicateFill"]} />
          <ToolGroup items={["cubes", "cross"]} />
          <ToolGroup items={["front", "back"]} />
          <ToolGroup items={["weld", "offset"]} />
        </div>
        <div className="grow" />
        <button type="button" aria-label="preferences" className="mr-2.5 pb-1">
          <svg viewBox="0 0 38 38" className="size-[38px]" fill="none" aria-hidden="true">
            <circle cx="19" cy="19" r="10" stroke="#3f9fd0" strokeWidth="7" />
            <path d="M19 1V7M19 31V37M1 19H7M31 19H37M6 6L10 10M28 28L32 32M32 6L28 10M10 28L6 32" stroke="#3f9fd0" strokeWidth="5" />
          </svg>
        </button>
        <button type="button" aria-label="sync" className="pb-1">
          <svg viewBox="0 0 38 38" className="size-[38px]" fill="none" strokeWidth="4" aria-hidden="true">
            <path d="M13 6Q3 12 6 26" stroke="#2c7286" />
            <path d="M1 23H11L7 32z" fill="#2c7286" />
            <path d="M18 5Q34 6 34 20" stroke={BLUE} />
            <path d="M21 0V13L13 6z" fill={BLUE} />
            <path d="M11 32Q20 38 30 29" stroke="#8dcfe0" />
            <path d="M25 24L36 23L34 33z" fill="#8dcfe0" />
          </svg>
        </button>
        <svg viewBox="0 0 14 14" className="-mb-2 size-[14px] self-end" stroke="#777" strokeWidth="2" aria-hidden="true">
          <path d="M0 14L14 0M7 14L14 7" />
        </svg>
      </footer>
    </div>
  );
}
